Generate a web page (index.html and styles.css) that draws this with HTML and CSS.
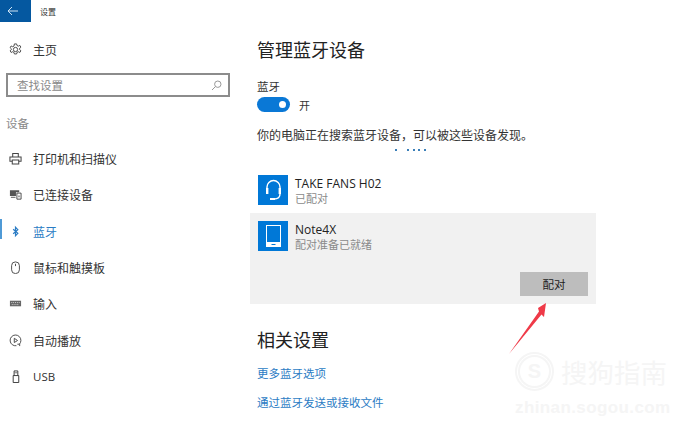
FILE: index.html
```html
<!DOCTYPE html>
<html lang="zh-CN">
<head>
<meta charset="utf-8">
<title>设置</title>
<link rel="stylesheet" href="styles.css">
</head>
<body>
<div class="app">
  <header class="topbar">
    <div class="back"><svg width="12" height="10" viewBox="0 0 12 10"><path d="M5 1 1 5l4 4M1 5h10" fill="none" stroke="#cfe3f3" stroke-width="1"/></svg></div>
    <span class="apptitle">设置</span>
  </header>
  <div class="columns">
    <nav class="sidebar">
      <div class="navitem home">
        <svg class="ico" viewBox="0 0 14 14"><g fill="none" stroke="#444" stroke-width="1"><circle cx="7" cy="7" r="2.3"/><path d="M5.8 1h2.4l.4 1.7 1.5.7 1.6-.8 1.1 1.8-1.3 1.2v1.6l1.3 1.2-1.1 1.8-1.6-.8-1.5.7-.4 1.7H5.8l-.4-1.7-1.5-.7-1.6.8-1.1-1.8 1.3-1.2V6.2L1.2 5l1.1-1.8 1.6.8 1.5-.7z"/></g></svg>
        <span>主页</span>
      </div>
      <div class="search"><span>查找设置</span><svg width="11" height="11" viewBox="0 0 11 11"><g fill="none" stroke="#999" stroke-width="1"><circle cx="6.8" cy="4.2" r="3.2"/><path d="M4.5 6.5 1 10"/></g></svg></div>
      <div class="section">设备</div>
      <div class="navitem">
        <svg class="ico" viewBox="0 0 14 14"><g fill="none" stroke="#444" stroke-width="1.1"><path d="M4 5V1.5h6V5M3.5 10H1V5.5h12V10h-2.5"/><path d="M3.5 8.5h7v4.5h-7z"/></g></svg>
        <span>打印机和扫描仪</span>
      </div>
      <div class="navitem">
        <svg class="ico" viewBox="0 0 14 14"><path d="M1 2.5h10v2H7.5v4H1z" fill="#555"/><path d="M2 9.5h5v1H2z" fill="#555"/><path d="M8.5 5.5h4.5v6.5H8.5z" fill="#fff" stroke="#444"/><path d="M10 8h1.5v2H10z" fill="#777"/></svg>
        <span>已连接设备</span>
      </div>
      <div class="navitem active">
        <svg class="ico" viewBox="0 0 14 14"><path d="M4.5 4.5 9.5 9 7 11.5v-9L9.5 5l-5 4.5" fill="none" stroke="#2b7cc4" stroke-width="1.3"/></svg>
        <span>蓝牙</span>
      </div>
      <div class="navitem">
        <svg class="ico" viewBox="0 0 14 14"><g fill="none" stroke="#444" stroke-width="1"><rect x="2.8" y="1" width="8.4" height="12.5" rx="4"/><path d="M7 3v2.5"/></g></svg>
        <span>鼠标和触摸板</span>
      </div>
      <div class="navitem">
        <svg class="ico" viewBox="0 0 14 14"><rect x="1" y="4" width="12" height="6" fill="#666"/><path d="M2.5 6h9M3 8.2h8" stroke="#ddd" stroke-width="1" stroke-dasharray="1 1"/></svg>
        <span>输入</span>
      </div>
      <div class="navitem">
        <svg class="ico" viewBox="0 0 14 14"><g fill="none" stroke="#444" stroke-width="1"><path d="M8 12.6A5.8 5.8 0 1 1 12.8 7a5.8 5.8 0 0 1-1.6 4"/><path d="M5.7 4.6v4.6L9.2 7zM9 11h2.5v2"/></g></svg>
        <span>自动播放</span>
      </div>
      <div class="navitem">
        <svg class="ico" viewBox="0 0 14 14"><g fill="none" stroke="#333" stroke-width="1"><path d="M4.5 6h6v7.5h-6zM5.5 6V1h4v5"/><path d="M6.7 2.5v1M8.3 2.5v1"/></g></svg>
        <span class="usb">USB</span>
      </div>
    </nav>
    <main class="content">
      <h1 class="heading">管理蓝牙设备</h1>
      <div class="label">蓝牙</div>
      <div class="toggle-row">
        <div class="toggle"><i class="knob"></i></div>
        <span>开</span>
      </div>
      <p class="desc">你的电脑正在搜索蓝牙设备，可以被这些设备发现。</p>
      <div class="dots"><i class="lead"></i><i></i><i></i><i></i><i></i></div>
      <div class="device first">
        <div class="tile"><svg width="30" height="30" viewBox="0 0 30 30"><g fill="none" stroke="#fff" stroke-width="1.4"><path d="M9 17v-5a6.5 6.5 0 0 1 13 0v5"/><path d="M22 19c0 4-3 5-6 5"/></g><rect x="8" y="13" width="2.4" height="6" fill="#fff"/><rect x="20.6" y="13" width="2.4" height="6" fill="#fff"/><rect x="12" y="23" width="5" height="2" fill="#fff"/></svg></div>
        <div class="devtext"><div class="devname">TAKE FANS H02</div><div class="devstatus">已配对</div></div>
      </div>
      <div class="panel">
        <div class="device">
          <div class="tile"><svg width="30" height="30" viewBox="0 0 30 30"><rect x="8.5" y="4.5" width="14" height="21" fill="none" stroke="#fff"/><path d="M8.5 21h14v4.500h-14z" fill="#fff"/><rect x="13.500" y="23" width="4" height="1" fill="#0078d7"/></svg></div>
          <div class="devtext"><div class="devname">Note4X</div><div class="devstatus">配对准备已就绪</div></div>
        </div>
        <div class="actions"><button class="pair">配对</button></div>
      </div>
      <h2 class="heading related">相关设置</h2>
      <a class="link">更多蓝牙选项</a>
      <a class="link">通过蓝牙发送或接收文件</a>
    </main>
  </div>
  <svg class="arrow" width="40" height="54" viewBox="0 0 40 54"><path d="M1 52 31 9.500 30 6l8-5-2 14-2.500-2.500z" fill="#ef3a48"/></svg>
  <div class="watermark">
    <div class="wm-top"><span class="wm-logo">S</span><span class="wm-name">搜狗指南</span></div>
    <div class="wm-url">zhinan.sogou.com</div>
  </div>
</div>
</body>
</html>
```

FILE: styles.css
```css
* { box-sizing: border-box; }
html, body { margin: 0; padding: 0; background: #fff; }
body { font-family: "Noto Sans CJK SC", "Liberation Sans", sans-serif; color: #222; overflow: hidden; }
.app { position: relative; width: 692px; height: 441px; overflow: hidden; }

.topbar { display: flex; align-items: center; height: 22px; }
.back { width: 31px; height: 22px; background: #0558a0; display: flex; align-items: center; justify-content: center; padding-right: 5px; }
.apptitle { margin-left: 9px; font-size: 8px; color: #333; }

.columns { display: flex; }
.sidebar { width: 240px; flex: none; padding-top: 9px; }
.navitem { display: flex; align-items: center; height: 36.4px; padding-left: 9px; font-size: 12px; color: #333; }
.navitem .ico { flex: none; width: 13px; height: 13px; margin-right: 11px; }
.navitem.home { height: 36px; }
.navitem.active { color: #2b7cc4; background: linear-gradient(#4f9ad6, #4f9ad6) 0 6px / 2px 20px no-repeat; height: 36px; }
.usb { font-family: "Open Sans", "Liberation Sans", sans-serif; font-size: 11.5px; }
.search { display: flex; align-items: center; justify-content: space-between; width: 224px; height: 24px; margin: 6px 0 0 6px; padding: 0 6px 0 9px; border: 2px solid #8c8c8c; font-size: 11.5px; color: #888; }
.section { height: 32px; margin: 10px 0 1.4px; padding-left: 6px; font-size: 11.5px; color: #888; display: flex; align-items: center; }

.content { flex: none; width: 452px; position: relative; }
.heading { margin: 0 0 0 17px; font-weight: 400; font-size: 18px; line-height: 24px; color: #222; }
.content > .heading:first-child { margin-top: 15px; }
.label { margin: 17px 0 0 17px; font-size: 11.5px; line-height: 16px; color: #333; }
.toggle-row { display: flex; align-items: center; gap: 9px; margin: 3px 0 0 17px; font-size: 11px; height: 15px; color: #333; }
.toggle { width: 33px; height: 15px; border-radius: 8px; background: #0a78d6; display: flex; align-items: center; justify-content: flex-end; padding-right: 4px; }
.knob { display: block; width: 7px; height: 7px; border-radius: 50%; background: #fff; }
.desc { margin: 15px 0 0 17px; font-size: 12px; line-height: 16px; color: #333; white-space: nowrap; }
.dots { display: flex; gap: 3.5px; margin: 6px 0 0 155px; height: 3px; }
.dots i { display: block; width: 2px; height: 2px; background: #3b7fb8; }
.dots i.lead { margin-right: 6.5px; }

.device { display: flex; align-items: flex-start; padding-left: 18px; gap: 7px; }
.device.first { margin-top: 23px; }
.tile { width: 30px; height: 30px; background: #0078d7; flex: none; }
.devtext { padding-top: 1px; }
.devname { font-family: "Open Sans", "Liberation Sans", sans-serif; font-size: 12px; line-height: 15px; color: #222; white-space: nowrap; }
.devstatus { font-size: 11px; line-height: 15px; color: #8a8a8a; }
.panel { width: 346px; height: 91px; margin: 7px 0 0 10px; padding-top: 8px; background: #f1f1f1; }
.panel .device { padding-left: 8px; }
.actions { display: flex; justify-content: flex-end; margin-top: 20px; padding-right: 8px; }
.pair { width: 68px; height: 24px; border: 0; background: #bdbdbd; font: inherit; font-size: 11.5px; color: #222; padding: 0; }

.related { margin-top: 23px; }
.link { display: block; margin-left: 17px; font-size: 11.5px; line-height: 16px; color: #2b7cc4; }
.related + .link { margin-top: 14px; }
.link + .link { margin-top: 13px; }

.arrow { position: absolute; left: 508px; top: 302px; }
.watermark { position: absolute; left: 515px; top: 352px; width: 160px; color: #f5f5f5; }
.wm-top { display: flex; align-items: center; gap: 7px; }
.wm-logo { width: 39px; height: 39px; border: 5px double #f5f5f5; border-radius: 50%; display: flex; align-items: center; justify-content: center; font: 700 20px "Liberation Sans", sans-serif; flex: none; }
.wm-name { font-size: 26.5px; font-weight: 400; line-height: 39px; white-space: nowrap; }
.wm-url { font: 700 17px/18px "Liberation Sans", sans-serif; margin-top: 8px; white-space: nowrap; letter-spacing: 0.4px; }
```
